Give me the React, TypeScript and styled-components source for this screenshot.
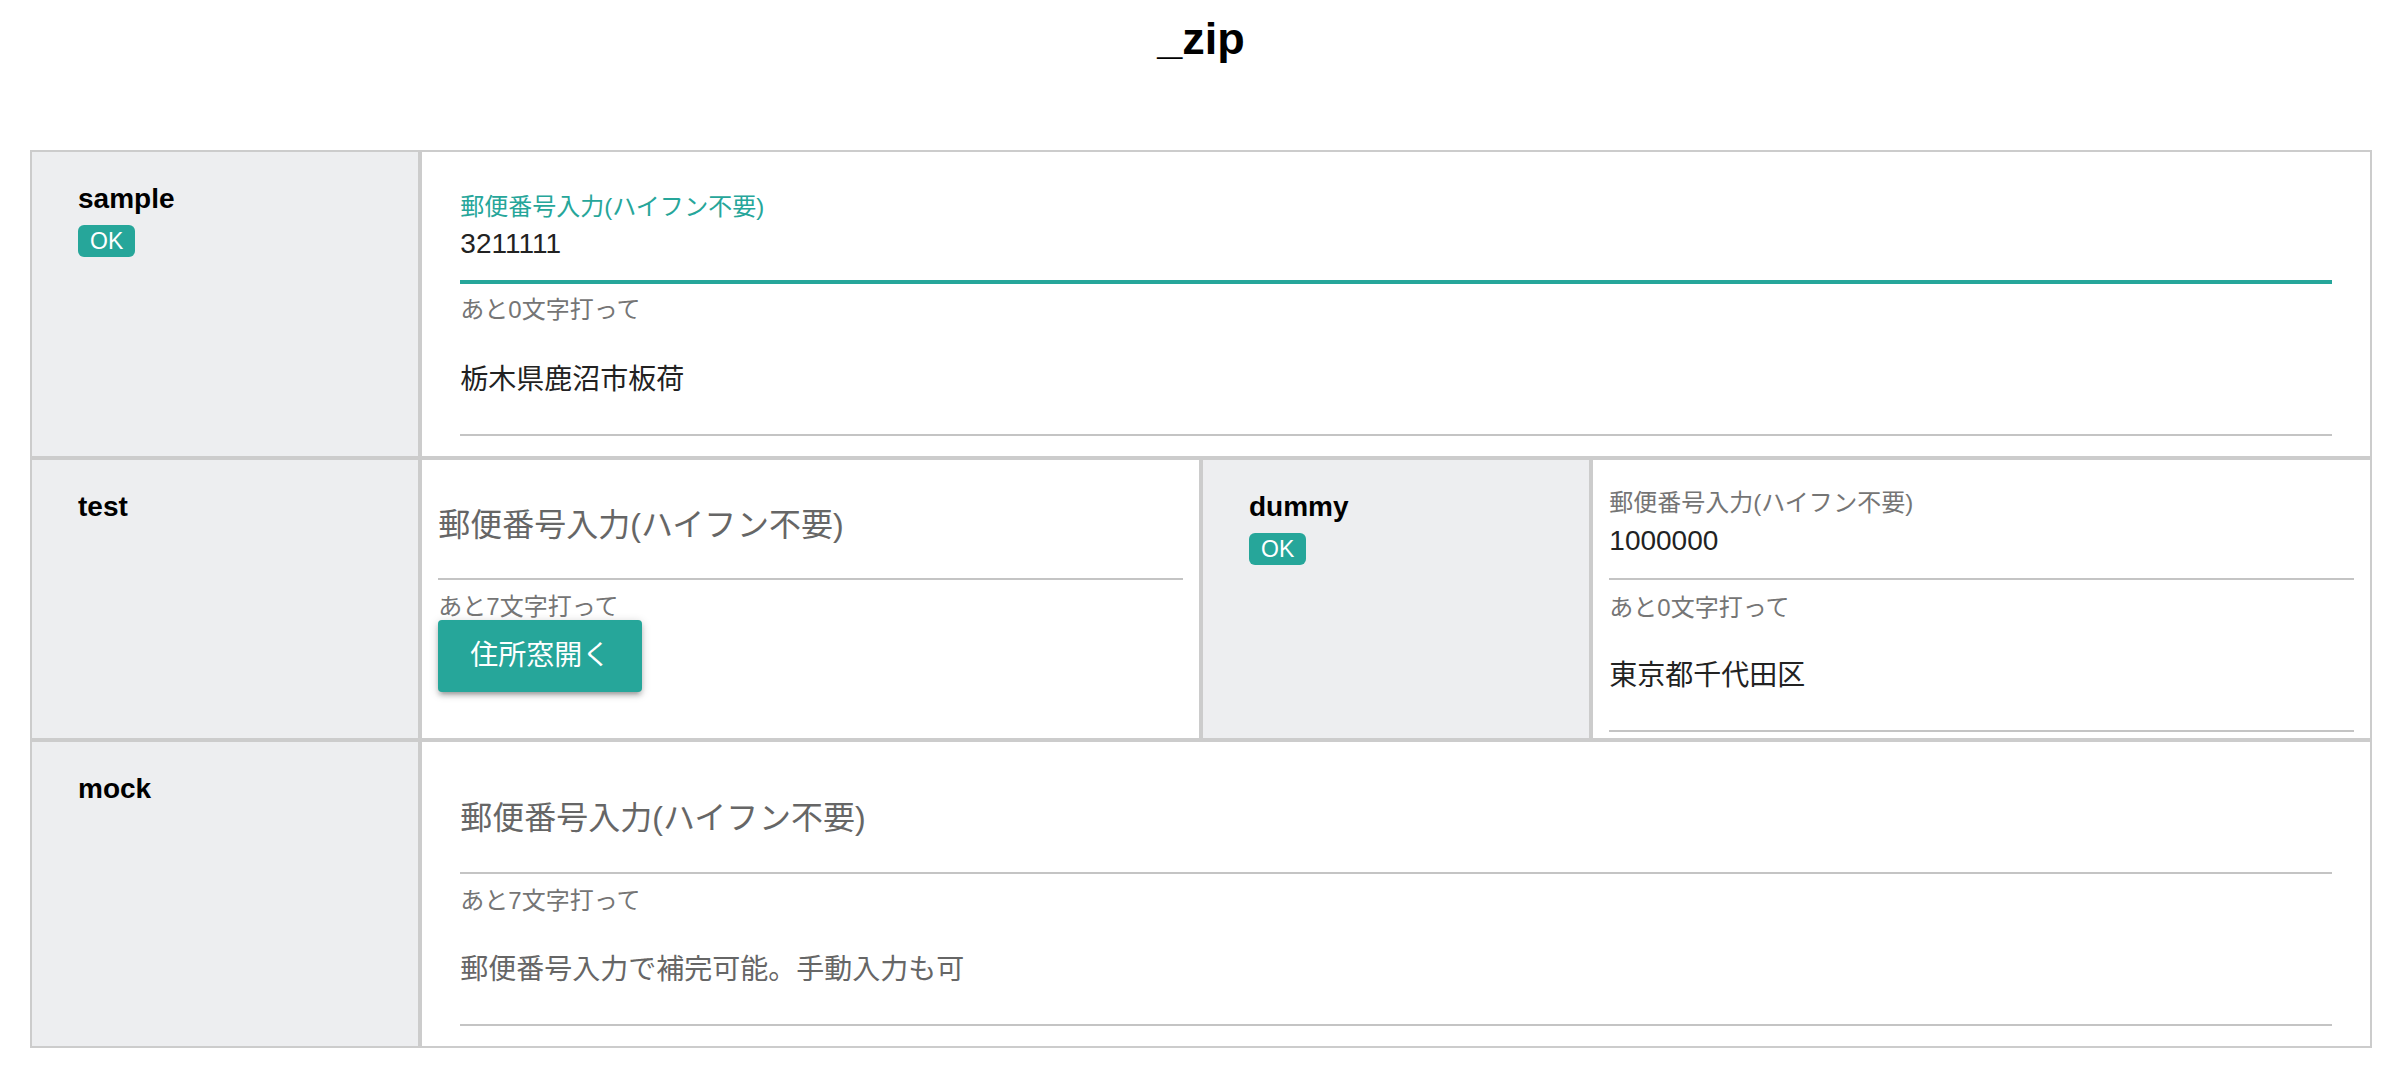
import React from "react";
import styled, { createGlobalStyle } from "styled-components";

const TEAL = "#26a69a";
const LINE = "#c4c4c4";
const CELL_BORDER = "#cccccc";

const GlobalStyle = createGlobalStyle`
  html, body { margin: 0; padding: 0; background: #ffffff; }
  body {
    font-family: "Liberation Sans", "Noto Sans CJK JP", sans-serif;
    color: #222222;
  }
  * { box-sizing: border-box; }
`;

const Page = styled.main`
  padding: 12px 22px 0 30px;
`;

const Title = styled.h1`
  margin: 0 0 84px;
  font-size: 45px;
  line-height: 54px;
  font-weight: 700;
  text-align: center;
  color: #000000;
`;

const Table = styled.div`
  display: grid;
  grid-template-columns: 1fr 2fr 1fr 2fr;
`;

const LabelCell = styled.div`
  background: #edeef0;
  border: 2px solid ${CELL_BORDER};
  padding: 31px 46px;
`;

const LabelName = styled.div`
  font-size: 28px;
  line-height: 32px;
  font-weight: 700;
  color: #000000;
`;

const Badge = styled.span`
  display: block;
  width: max-content;
  margin-top: 10px;
  padding: 0 12px;
  background: ${TEAL};
  color: #ffffff;
  font-size: 23px;
  line-height: 32px;
  border-radius: 6px;
`;

const FieldCell = styled.div<{ $span?: number; $pt: number; $px: number; $pb: number }>`
  grid-column: span ${(p) => p.$span ?? 1};
  background: #ffffff;
  border: 2px solid ${CELL_BORDER};
  padding: ${(p) => `${p.$pt}px ${p.$px}px ${p.$pb}px`};
`;

const InputArea = styled.div<{ $focused?: boolean; $pb: number }>`
  padding-bottom: ${(p) => p.$pb}px;
  border-bottom: ${(p) => (p.$focused ? `4px solid ${TEAL}` : `2px solid ${LINE}`)};
`;

const FloatLabel = styled.label<{ $active?: boolean }>`
  display: block;
  font-size: 24px;
  line-height: 24px;
  color: ${(p) => (p.$active ? TEAL : "#757575")};
`;

const InputValue = styled.div<{ $mt: number }>`
  margin-top: ${(p) => p.$mt}px;
  font-size: 28px;
  line-height: 28px;
  color: #222222;
`;

const Placeholder = styled.div`
  font-size: 32px;
  line-height: 32px;
  color: #666666;
`;

const Helper = styled.div<{ $mt: number }>`
  margin-top: ${(p) => p.$mt}px;
  font-size: 24px;
  line-height: 24px;
  color: #757575;
`;

const AddressArea = styled.div<{ $mt: number; $muted?: boolean }>`
  margin-top: ${(p) => p.$mt}px;
  padding-bottom: 40px;
  border-bottom: 2px solid ${LINE};
  font-size: 28px;
  line-height: 28px;
  color: ${(p) => (p.$muted ? "#666666" : "#222222")};
`;

const OpenButton = styled.button`
  display: block;
  margin-top: 1px;
  height: 72px;
  padding: 0 32px;
  border: none;
  border-radius: 4px;
  background: ${TEAL};
  color: #ffffff;
  font-family: inherit;
  font-size: 28px;
  line-height: 72px;
  box-shadow: 0 4px 4px 0 rgba(0, 0, 0, 0.14), 0 6px 2px -4px rgba(0, 0, 0, 0.12),
    0 2px 10px 0 rgba(0, 0, 0, 0.2);
  cursor: pointer;
`;

const LABEL = "郵便番号入力(ハイフン不要)";

function NameCell({ name, ok }: { name: string; ok?: boolean }) {
  return (
    <LabelCell>
      <LabelName>{name}</LabelName>
      {ok && <Badge>OK</Badge>}
    </LabelCell>
  );
}

export default function App() {
  return (
    <>
      <GlobalStyle />
      <Page>
        <Title>_zip</Title>
        <Table>
          <NameCell name="sample" ok />
          <FieldCell $span={3} $pt={43} $px={38} $pb={20}>
            <InputArea $focused $pb={22}>
              <FloatLabel $active>{LABEL}</FloatLabel>
              <InputValue $mt={11}>3211111</InputValue>
            </InputArea>
            <Helper $mt={14}>あと0文字打って</Helper>
            <AddressArea $mt={44}>栃木県鹿沼市板荷</AddressArea>
          </FieldCell>

          <NameCell name="test" />
          <FieldCell $pt={49} $px={16} $pb={6}>
            <InputArea $pb={37}>
              <Placeholder>{LABEL}</Placeholder>
            </InputArea>
            <Helper $mt={15}>あと7文字打って</Helper>
            <OpenButton type="button">住所窓開く</OpenButton>
          </FieldCell>
          <NameCell name="dummy" ok />
          <FieldCell $pt={31} $px={16} $pb={6}>
            <InputArea $pb={23}>
              <FloatLabel>{LABEL}</FloatLabel>
              <InputValue $mt={12}>1000000</InputValue>
            </InputArea>
            <Helper $mt={16}>あと0文字打って</Helper>
            <AddressArea $mt={42}>東京都千代田区</AddressArea>
          </FieldCell>

          <NameCell name="mock" />
          <FieldCell $span={3} $pt={60} $px={38} $pb={20}>
            <InputArea $pb={38}>
              <Placeholder>{LABEL}</Placeholder>
            </InputArea>
            <Helper $mt={15}>あと7文字打って</Helper>
            <AddressArea $mt={43} $muted>
              郵便番号入力で補完可能。手動入力も可
            </AddressArea>
          </FieldCell>
        </Table>
      </Page>
    </>
  );
}
